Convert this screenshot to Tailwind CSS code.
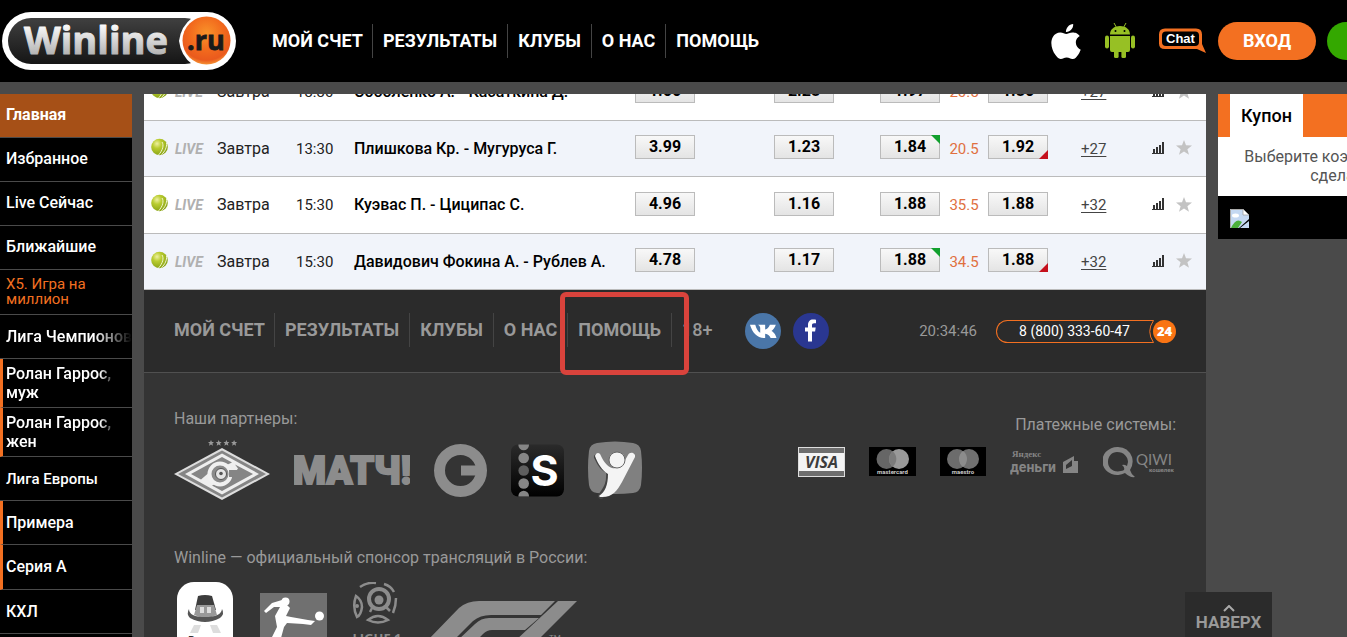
<!DOCTYPE html>
<html lang="ru">
<head>
<meta charset="utf-8">
<title>Winline.ru</title>
<script src="https://cdn.jsdelivr.net/npm/@tailwindcss/browser@4"></script>
</head>
<body class="flex h-screen flex-col overflow-hidden bg-[#4a4a4a] font-['Roboto',sans-serif] text-[16px] leading-5">
<svg class="absolute size-0" aria-hidden="true">
  <defs>
    <radialGradient id="ballFill" cx=".35" cy=".3" r=".8"><stop offset="0" stop-color="#eef0a0"/><stop offset=".35" stop-color="#b9cc2f"/><stop offset="1" stop-color="#7f9a10"/></radialGradient>
    <symbol id="ball" viewBox="0 0 17 18"><circle cx="8.500" cy="9" r="8.300" fill="url(#ballFill)"/><path d="M11 4c2 3 1 8-3.500 13M15.500 5c.5 4-1.500 8.500-5 11.500" fill="none" stroke="#f1f5cf" stroke-width="1"/></symbol>
    <symbol id="bars" viewBox="0 0 12 12"><path d="M0 11h12v1H0zM1 7h2v4H1zM4 5h2v6H4zM7 3h2v8H7zM10 0h2v11h-2z" fill="#333"/></symbol>
    <symbol id="star" viewBox="0 0 16 15"><path d="M8 0l2 5.300 6 .3-4.600 3.600 1.600 5.600L8 11.600 3 14.800l1.600-5.600L0 5.600l6-.3z" fill="#c3c3c3"/></symbol>
  </defs>
</svg>

<header class="flex h-[82px] shrink-0 items-center overflow-hidden bg-black">
  <a href="#" aria-label="Winline.ru" class="ml-0.5 mr-9 shrink-0">
    <svg width="234" height="58" viewBox="0 0 234 58">
      <defs>
        <linearGradient id="pill" x2="0" y2="1"><stop offset="0" stop-color="#404040"/><stop offset="1" stop-color="#151515"/></linearGradient>
        <linearGradient id="silver" x2="0" y2="1"><stop offset=".2" stop-color="#fff"/><stop offset="1" stop-color="#9a9a9a"/></linearGradient>
        <radialGradient id="orb" cx=".5" cy=".35" r=".7"><stop offset="0" stop-color="#f9932a"/><stop offset=".5" stop-color="#f26a1d"/><stop offset=".8" stop-color="#ea5a1d"/><stop offset="1" stop-color="#fbb040"/></radialGradient>
      </defs>
      <rect width="234" height="58" rx="29" fill="#fff"/>
      <rect x="6" y="6" width="200" height="46" rx="23" fill="url(#pill)"/>
      <path d="M190 6q-11 8-13 23 2 15 13 23h20V6z" fill="#fff"/>
      <circle cx="204.500" cy="28.500" r="24" fill="url(#orb)"/>
      <text x="22" y="42" font-family="Open Sans, sans-serif" font-weight="700" font-size="38" fill="url(#silver)" stroke="url(#silver)" stroke-width="1" stroke-linejoin="round">Winline</text>
      <text x="185" y="38" font-family="Open Sans, sans-serif" font-weight="700" font-size="27" fill="#1a1a1a" stroke="#1a1a1a" stroke-width=".8">.ru</text>
    </svg>
  </a>
  <nav class="flex flex-1 text-[18px] font-bold leading-[34px] text-white">
    <a href="#" class="whitespace-nowrap border-r border-[#444] pr-[9px]">МОЙ СЧЕТ</a>
    <a href="#" class="whitespace-nowrap border-r border-[#444] px-2.5">РЕЗУЛЬТАТЫ</a>
    <a href="#" class="whitespace-nowrap border-r border-[#444] px-2.5">КЛУБЫ</a>
    <a href="#" class="whitespace-nowrap border-r border-[#444] px-2.5">О НАС</a>
    <a href="#" class="whitespace-nowrap px-2.5">ПОМОЩЬ</a>
  </nav>
  <div class="flex w-[296px] shrink-0 items-center">
    <a href="#" aria-label="iOS" class="mr-6 shrink-0"><svg width="30" height="35" viewBox="2 0 20 24" preserveAspectRatio="none" fill="#fff"><path d="M12.152 6.896c-.948 0-2.415-1.078-3.960-1.040-2.040.027-3.910 1.183-4.961 3.014-2.117 3.675-.546 9.103 1.519 12.090 1.013 1.454 2.208 3.090 3.792 3.039 1.520-.065 2.090-.987 3.935-.987 1.831 0 2.350.987 3.960.948 1.637-.026 2.676-1.480 3.676-2.948 1.156-1.688 1.636-3.325 1.662-3.415-.039-.013-3.182-1.221-3.220-4.857-.026-3.040 2.480-4.494 2.597-4.559-1.429-2.090-3.623-2.324-4.390-2.376-2-.156-3.675 1.090-4.610 1.090zM15.530 3.830c.843-1.012 1.400-2.427 1.245-3.830-1.207.052-2.662.805-3.532 1.818-.78.896-1.454 2.338-1.273 3.714 1.338.104 2.715-.688 3.559-1.701"/></svg></a>
    <a href="#" aria-label="Android" class="mr-6 shrink-0"><svg width="30" height="36" viewBox="0 0 30 36" fill="#97c024"><path d="M5 11.500C5 6.500 9 3 15 3s10 3.500 10 8.500zM5 13h20v14a2 2 0 0 1-2 2H7a2 2 0 0 1-2-2z"/><rect y="12.500" width="4" height="13" rx="2"/><rect x="26" y="12.500" width="4" height="13" rx="2"/><rect x="9" y="24" width="4.600" height="11" rx="1.500"/><rect x="16.400" y="24" width="4.600" height="11" rx="1.500"/><path d="M9 0l2.500 4.500M21 0l-2.500 4.500" stroke="#97c024"/><circle cx="10.500" cy="8" r="1" fill="#000"/><circle cx="19.500" cy="8" r="1" fill="#000"/></svg></a>
    <a href="#" aria-label="Chat" class="mr-3 shrink-0"><svg width="47" height="26" viewBox="0 0 47 26"><path d="M6 .5h31q6 0 6 6v9.500l4 9-9-4H6q-6 0-6-5.500V6.500Q0 .5 6 .5z" fill="#f37021"/><rect x="3" y="3.500" width="37" height="14.500" rx="4" fill="#000"/><text x="7" y="15" font-family="Liberation Sans, sans-serif" font-weight="700" font-size="13" fill="#fff">Chat</text></svg></a>
    <button class="mr-[11px] h-[38px] w-[98px] shrink-0 rounded-full bg-[#f37021] text-[18px] font-bold text-white">ВХОД</button>
    <button aria-label="Регистрация" class="h-[38px] w-40 shrink-0 rounded-full bg-[#34a800]"></button>
  </div>
</header>

<div class="mt-3 flex min-h-0 flex-1 gap-3">
  <nav class="flex w-[132px] shrink-0 flex-col overflow-hidden bg-black text-[15px] font-medium text-white *:shrink-0 *:border-b *:border-[#4a4a4a]">
    <a href="#" class="flex h-11 items-center bg-[#a65017] pl-1.5 pb-0.5 text-[16px] font-bold">Главная</a>
    <a href="#" class="flex h-11 items-center pl-1.5 pb-0.5 text-[16px]">Избранное</a>
    <a href="#" class="flex h-11 items-center pl-1.5 pb-0.5 text-[16px]">Live Сейчас</a>
    <a href="#" class="flex h-11 items-center pl-1.5 pb-0.5 text-[16px]">Ближайшие</a>
    <a href="#" class="flex h-[45px] items-center pl-1.5 font-normal leading-[15px] text-[#f37021]">X5. Игра на<br>миллион</a>
    <a href="#" class="flex h-11 items-center pl-1.5 text-[16px]"><span class="w-full whitespace-nowrap mask-r-from-70% mask-r-to-100%">Лига Чемпионов</span></a>
    <a href="#" class="flex h-[49px] items-center border-l-3 border-l-[#f37021]! pl-[3px] text-[16px] leading-[19px]"><span class="w-[110px] mask-r-from-85% mask-r-to-100%">Ролан Гаррос,<br>муж</span></a>
    <a href="#" class="flex h-[49px] items-center border-l-3 border-l-[#f37021]! pl-[3px] text-[16px] leading-[19px]"><span class="w-[110px] mask-r-from-85% mask-r-to-100%">Ролан Гаррос,<br>жен</span></a>
    <a href="#" class="flex h-11 items-center pl-1.5 text-[15px]">Лига Европы</a>
    <a href="#" class="flex h-11 items-center border-l-3 border-l-[#f37021]! pl-[3px] text-[16px]">Примера</a>
    <a href="#" class="flex h-[45px] items-center border-l-3 border-l-[#f37021]! pl-[3px] text-[16px]">Серия А</a>
    <a href="#" class="flex h-11 items-center pl-1.5 text-[16px]">КХЛ</a>
    <div class="h-11"></div>
  </nav>

  <main class="min-w-0 flex-1 overflow-hidden bg-[#343434]">
    <table class="-mt-[30px] w-full table-fixed border-separate border-spacing-0 text-[#222]">
      <colgroup><col class="w-[31px]"><col class="w-[42px]"><col class="w-[79px]"><col class="w-[58px]"><col><col class="w-[139px]"><col class="w-[106px]"><col class="w-[60px]"><col class="w-[48px]"><col class="w-[93px]"><col class="w-[71px]"><col class="w-[24px]"><col class="w-[30px]"></colgroup>
      <tbody id="matches"></tbody>
    </table>

    <footer class="text-[#999]">
      <div class="flex h-[83px] items-center border-b border-[#505050] bg-[#2b2b2b] px-[30px]">
        <nav class="flex pb-0.5 text-[18px] font-bold leading-[34px]">
          <a href="#" class="whitespace-nowrap border-r border-[#444] pr-[9px]">МОЙ СЧЕТ</a>
          <a href="#" class="whitespace-nowrap border-r border-[#444] px-2.5">РЕЗУЛЬТАТЫ</a>
          <a href="#" class="whitespace-nowrap border-r border-[#444] px-2.5">КЛУБЫ</a>
          <a href="#" class="whitespace-nowrap border-r border-[#444] px-2.5">О НАС</a>
          <a href="#" class="relative whitespace-nowrap border-r border-[#444] px-2.5">ПОМОЩЬ<span class="absolute -bottom-7 -left-2 -right-[18px] -top-[21px] rounded-md border-5 border-[#d9433c]"></span></a>
          <span class="px-2.5 font-medium">18+</span>
        </nav>
        <a href="#" aria-label="ВКонтакте" class="ml-[22px] mr-3 shrink-0"><svg width="36" height="36" viewBox="0 0 36 36"><circle cx="18" cy="18" r="18" fill="#4a76a8"/><path transform="translate(4 3.500) scale(1.180 1.100)" d="M13.200 19.500C7 19.500 3 15 .8 7.500h4.500c1 4 2.500 6.500 4.200 7.200l0-4.500q-.2-2-1.800-2.700h6v4.300c1.700-.2 3.200-2 4-4.300h5c-.6 2.500-2.400 4.600-3.700 5.700 1.400.8 3.400 2.400 4.300 6.300h-5c-.6-2-2.200-3.500-4.600-3.900v3.900z" fill="#fff"/></svg></a>
        <a href="#" aria-label="Facebook" class="shrink-0"><svg width="36" height="36" viewBox="0 0 36 36"><circle cx="18" cy="18" r="18" fill="#2a3791"/><path d="M15 28.500V18.500h-3v-4h3v-2.500c0-3.500 2-5.500 5-5.500 1.300 0 2 .1 3 .3v3.500h-1.800c-1.700 0-2.200.7-2.200 2v2.200h3.700l-.6 4h-3.100v10z" fill="#fff"/></svg></a>
        <time class="ml-auto mr-[19px] text-[15px]">20:34:46</time>
        <a href="tel:88003336047" class="flex items-center text-white">
          <span class="flex h-[23px] w-[150px] items-center justify-center rounded-l-full border border-r-0 border-[#f37021] pl-1.5 text-[14px]">8 (800) 333-60-47</span>
          <svg width="30" height="23" viewBox="0 0 30 23" class="shrink-0"><path d="M0 .5h7.500q-7.500 11 0 22H0" fill="none" stroke="#f37021"/><circle cx="18.500" cy="11.500" r="11.500" fill="#f97414"/><text x="18.500" y="16" text-anchor="middle" font-family="Open Sans, sans-serif" font-size="13" font-weight="800" fill="#fff">24</text></svg>
        </a>
      </div>

      <div class="px-[30px] pt-9">
        <div class="flex justify-between">
          <section>
            <h2>Наши партнеры:</h2>
            <div class="mt-[11px] flex h-[60px] items-center gap-6">
              <svg width="96" height="60" viewBox="0 0 96 60"><path d="M0 34L48 8l48 26-48 26z" fill="#ddd"/><path d="M4 34L48 10.500 92 34 48 57.500z" fill="#858585"/><path d="M11 34L48 13.500 85 34 48 54.500z" fill="#eee"/><path d="M17 34L48 17l10 5.500-24 11-7 6zM79 34L48 51l-10-5.500 20-9 6-8-3-4z" fill="#858585"/><circle cx="46" cy="34" r="10.500" fill="#8a8a8a" stroke="#f0f0f0" stroke-width="4"/><path d="M55 30h8v7h-8z" fill="#858585"/><circle cx="47" cy="34" r="5.500" fill="#e4e4e4" stroke="#555"/><circle cx="47" cy="33.500" r="1.800" fill="#555"/><g fill="#999"><path id="st" d="M37 0l.9 2h2.100l-1.600 1.500.6 2.200L37 4.500 35 5.700l.6-2.200L34 2h2.100z"/><use href="#st" x="7.700"/><use href="#st" x="15.400"/><use href="#st" x="23.100"/></g></svg>
              <svg width="116" height="34" viewBox="0 0 116 34"><text x="58" y="31" text-anchor="middle" font-family="Roboto, sans-serif" font-weight="900" font-size="38" fill="#8c8c8c" stroke="#8c8c8c" stroke-width="2">МАТЧ!</text></svg>
              <svg width="53" height="53" viewBox="0 0 53 53"><circle cx="26.500" cy="26.500" r="21" fill="none" stroke="#8c8c8c" stroke-width="11"/><path d="M27 21.500h20v10H27z" fill="#8c8c8c"/></svg>
              <svg width="53" height="53" viewBox="0 0 53 53"><defs><linearGradient id="sb" x2="0" y2="1"><stop stop-color="#2b2b2b"/><stop offset="1" stop-color="#000"/></linearGradient><clipPath id="sc"><rect width="53" height="52" y=".5" rx="7"/></clipPath></defs><g clip-path="url(#sc)"><rect width="53" height="53" fill="url(#sb)"/><g fill="#868686"><circle cx="12.700" cy="1" r="5.300"/><circle cx="12.700" cy="14" r="5.300"/><circle cx="12.700" cy="26.500" r="5.300" fill="#5f5f5f"/><circle cx="12.700" cy="39.500" r="5.300"/><circle cx="12.700" cy="52" r="5.300"/></g></g><text x="33.500" y="42" text-anchor="middle" font-family="Inter, sans-serif" font-weight="700" font-size="43" fill="#fff">S</text></svg>
              <svg width="54" height="58" viewBox="0 0 54 58"><path d="M9 2q18-3 36 0 7 1 8 8 2 17 0 34-1 7-8 8-18 2-36 0-7-1-8-8-2-17 0-34 1-7 8-8z" fill="#808080"/><path d="M9 16c4 9 7 12 12 14 1 12-2 17-8 25" fill="none" stroke="#444" stroke-width="6" stroke-linecap="round"/><path d="M7 15c1-4 5-4 6 0 3 6 6 10 11 12 6 2 12-5 16-13 2-4 8-2 7 2L34 41c-5 9-10 16-22 15l-1-1c6-4 9-11 9-22-6-4-10-10-13-18z" fill="#f4f4f4"/><circle cx="29" cy="19" r="8" fill="#f4f4f4" stroke="#666"/></svg>
            </div>
          </section>
          <section class="pt-1.5">
            <h2 class="text-right">Платежные системы:</h2>
            <div class="mt-[11px] flex items-center gap-6">
              <svg width="47" height="30" viewBox="0 0 47 30"><rect width="47" height="30" fill="#ddd"/><path d="M1 1h45v5H1zM1 24h45v5H1z" fill="#6e6e6e"/><rect x="1" y="6" width="45" height="18" fill="#f4f4f4"/><text x="23.500" y="21" text-anchor="middle" font-family="Open Sans, sans-serif" font-style="italic" font-weight="700" font-size="16" fill="#3c3c3c">VISA</text></svg>
              <svg width="47" height="30" viewBox="0 0 47 30"><rect width="47" height="29" fill="#000"/><circle cx="17.500" cy="12" r="10" fill="#666"/><circle cx="30" cy="12" r="10" fill="#999"/><path d="M23.700 4.300a10 10 0 0 1 0 15.400 10 10 0 0 1 0-15.400z" fill="#7b7b7b"/><text x="23.500" y="27" text-anchor="middle" font-size="6" font-weight="700" fill="#ccc">mastercard</text></svg>
              <svg width="46" height="30" viewBox="0 0 46 30"><rect width="46" height="29" fill="#000"/><circle cx="17" cy="12" r="10" fill="#6c6c6c"/><circle cx="29" cy="12" r="10" fill="#707070"/><path d="M23 4a10 10 0 0 1 0 16 10 10 0 0 1 0-16z" fill="#8c8c8c"/><text x="23" y="27" text-anchor="middle" font-size="6" font-weight="700" fill="#ccc">maestro</text></svg>
              <svg width="69" height="30" viewBox="0 0 69 30" fill="#858585"><text x="2" y="10" font-family="Liberation Serif, serif" font-weight="700" font-size="9">Яндекс</text><text x="0" y="25" font-family="Roboto, sans-serif" font-weight="700" font-size="14">деньги</text><path d="M53 15l11-6v5h4v12H53zM56 18v4l6-3v-6z" fill-rule="evenodd"/></svg>
              <svg width="73" height="32" viewBox="0 0 73 32" fill="#858585"><path d="M15 1a15 14 0 1 0 7 26q5 5 10 4-4-3-5-7Q31 18 29 11 25 1 15 1zm-1 5c7 0 11 5 11 10l-1 4q-3-2-5-1 3 2 2 5c-9 4-16-1-16-8 0-6 4-10 9-10z"/><text x="33" y="19" font-family="Lato, sans-serif" font-weight="400" font-size="15">QIWI</text><text x="46" y="26" font-weight="700" font-size="6">кошелек</text></svg>
            </div>
          </section>
        </div>
        <section class="mt-12">
          <h2>Winline — официальный спонсор трансляций в России:</h2>
          <div class="mt-3.5 flex items-start pl-[3px]">
            <svg width="57" height="72" viewBox="0 0 57 72"><rect width="56" height="72" rx="17" fill="#fff"/><path d="M21 14q7-2 14 0l4 14H18z" fill="#3c3c3c"/><path d="M20 23h17l3 10q-11 5-23 0z" fill="#999"/><path d="M23 25h4v6h-4zM30 25h4v6h-4z" fill="#ddd"/><path d="M12 27q0 8 16 8t17-8q3 5-2 9-15 8-30 0-4-4-1-9z" fill="#555"/><path d="M17 43h7l-3 8h-8zM33 43h7l4 8h-8z" fill="#ddd"/><text x="28" y="62" text-anchor="middle" font-size="10" font-weight="700" fill="#333">Россия</text></svg>
            <svg class="ml-[26px] mt-[11px]" width="67" height="67" viewBox="0 0 67 67"><rect width="67" height="67" fill="#707070"/><circle cx="59.500" cy="23" r="4.500" fill="#fff"/><circle cx="25.500" cy="8.500" r="4" fill="#fff"/><path d="M22 7l-10 3-8 8 2 2 8-6h6l-5 9 2 11-5 10-4 3 6 7 7-9 3-11 3-4 16 1 8 1 4-4-7-1-17-3-5-1 4-8z" fill="#fff"/></svg>
            <svg class="ml-[25px]" width="54" height="72" viewBox="0 0 54 72" fill="none" stroke="#8c8c8c" stroke-width="2.500"><circle cx="27" cy="17" r="10" stroke-width="4"/><circle cx="27" cy="18" r="4.500" fill="#8c8c8c" stroke="none"/><path d="M20 26l-2 4M34 25l4 4M8 5q7-5 16-4M32 2q7 2 10 8M44 16q0 8-3 15M4 14q6 4 6 11-1 8-5 10-5-10-1-21zM16 38q10-8 20 0-10 5-20 0z"/><circle cx="5" cy="24" r="2" fill="#8c8c8c" stroke="none"/><text x="25" y="61" text-anchor="middle" font-family="Open Sans, sans-serif" font-weight="700" font-size="13" fill="#8c8c8c" stroke="none">LIGUE 1</text></svg>
            <svg class="ml-[21px] mt-[19px]" width="150" height="42" viewBox="0 0 150 42"><path d="M0 40L32 7q8-7 20-7h76l-14 14H64q-11 0-18 6L26 40zM30 40l18-17q6-6 14-6h50L98 29H65q-5 0-9 4l-7 7zM131 0h19l-40 40H88z" fill="#8c8c8c"/><text x="122" y="39" font-size="8" fill="#8c8c8c">TM</text></svg>
          </div>
        </section>
      </div>
    </footer>
  </main>

  <aside class="w-[129px] shrink-0 overflow-hidden">
    <div class="w-[299px]">
      <div class="flex bg-[#f37021] pl-3"><h2 class="flex h-[43px] w-[73px] items-center justify-center bg-white text-[18px] font-medium text-black">Купон</h2></div>
      <p class="h-[59px] bg-white pt-2.5 text-center leading-[19px] text-[#555]">Выберите коэффициенты, чтобы<br>сделать ставку</p>
      <div class="h-[43px] bg-black px-3 py-[13px]">
        <svg width="19" height="19" viewBox="0 0 19 19"><path d="M0 0h13l6 6v4L9 19H0z" fill="#c4d8f2"/><path d="M13 0v6h6z" fill="#fff" stroke="#999" stroke-width=".7"/><path d="M1 19q5-11 11-6l-4 6z" fill="#4caf3c"/><path d="M19 12v7h-9z" fill="#c4d8f2"/><path d="M.5 19V.5H13" fill="none" stroke="#aaa"/><ellipse cx="5.500" cy="6.500" rx="3.500" ry="2" fill="#fff"/></svg>
      </div>
    </div>
  </aside>
</div>

<button class="fixed bottom-0 right-[75px] flex h-[45px] w-[87px] flex-col items-center bg-[#2b2b2b] pt-[13px] text-[17px] font-bold text-[#999]">
  <svg width="12" height="7" viewBox="0 0 12 7" class="shrink-0"><path d="M1 6l5-5 5 5" fill="none" stroke="#aaa" stroke-width="2"/></svg>
  <span>НАВЕРХ</span>
</button>

<script>
  const matches = [
    ['13:30', 'Соболенко А. - Касаткина Д.', '1.66', '2.28', '1.97', '20.5', '1.86', '+27', false],
    ['13:30', 'Плишкова Кр. - Мугуруса Г.', '3.99', '1.23', '1.84', '20.5', '1.92', '+27', true],
    ['15:30', 'Куэвас П. - Циципас С.', '4.96', '1.16', '1.88', '35.5', '1.88', '+32', false],
    ['15:30', 'Давидович Фокина А. - Рублев А.', '4.78', '1.17', '1.88', '34.5', '1.88', '+32', true],
  ];
  const up = '<i class="absolute -right-px -top-px size-[9px] bg-[#12a02e] [clip-path:polygon(0_0,100%_0,100%_100%)]"></i>';
  const down = '<i class="absolute -bottom-px -right-px size-[9px] bg-[#c5101c] [clip-path:polygon(100%_0,100%_100%,0_100%)]"></i>';
  const odd = (v, mark = '') => `<td class="border-b border-[#bbb] pb-[3px]"><button class="relative block h-6 w-[60px] border border-[#bbb] bg-linear-to-b from-[#f8f8f8] to-[#e4e4e4] text-[16px] leading-[22px] font-bold text-black">${v}${mark}</button></td>`;
  const cell = (v, cls = '') => `<td class="border-b border-[#bbb] ${cls}">${v}</td>`;
  document.getElementById('matches').innerHTML = matches.map(([t, n, a, b, c, total, d, more, marks], i) => `
    <tr class="${i % 2 ? 'h-14 bg-[#f1f4fa]' : 'h-[57px] bg-white'}">
      ${cell('<svg class="ml-[7px] h-[18px] w-[17px]"><use href="#ball"/></svg>', 'pb-1')}
      ${cell('LIVE', 'text-[14px] font-bold italic text-[#b0b0b0]')}
      ${cell('Завтра')}${cell(t, 'text-[15px]')}
      ${cell(n, 'whitespace-nowrap font-medium text-black')}
      ${odd(a)}${odd(b)}${odd(c, marks ? up : '')}
      ${cell(total, 'text-center text-[15px] text-[#e0703f]')}
      ${odd(d, marks ? down : '')}
      ${cell(`<a href="#" class="underline underline-offset-2">${more}</a>`, 'text-[15px] text-[#444]')}
      ${cell('<svg class="size-3"><use href="#bars"/></svg>', 'pb-0.5')}
      ${cell('<svg class="h-[15px] w-4"><use href="#star"/></svg>', 'pb-0.5')}
    </tr>`).join('');
</script>
</body>
</html>
